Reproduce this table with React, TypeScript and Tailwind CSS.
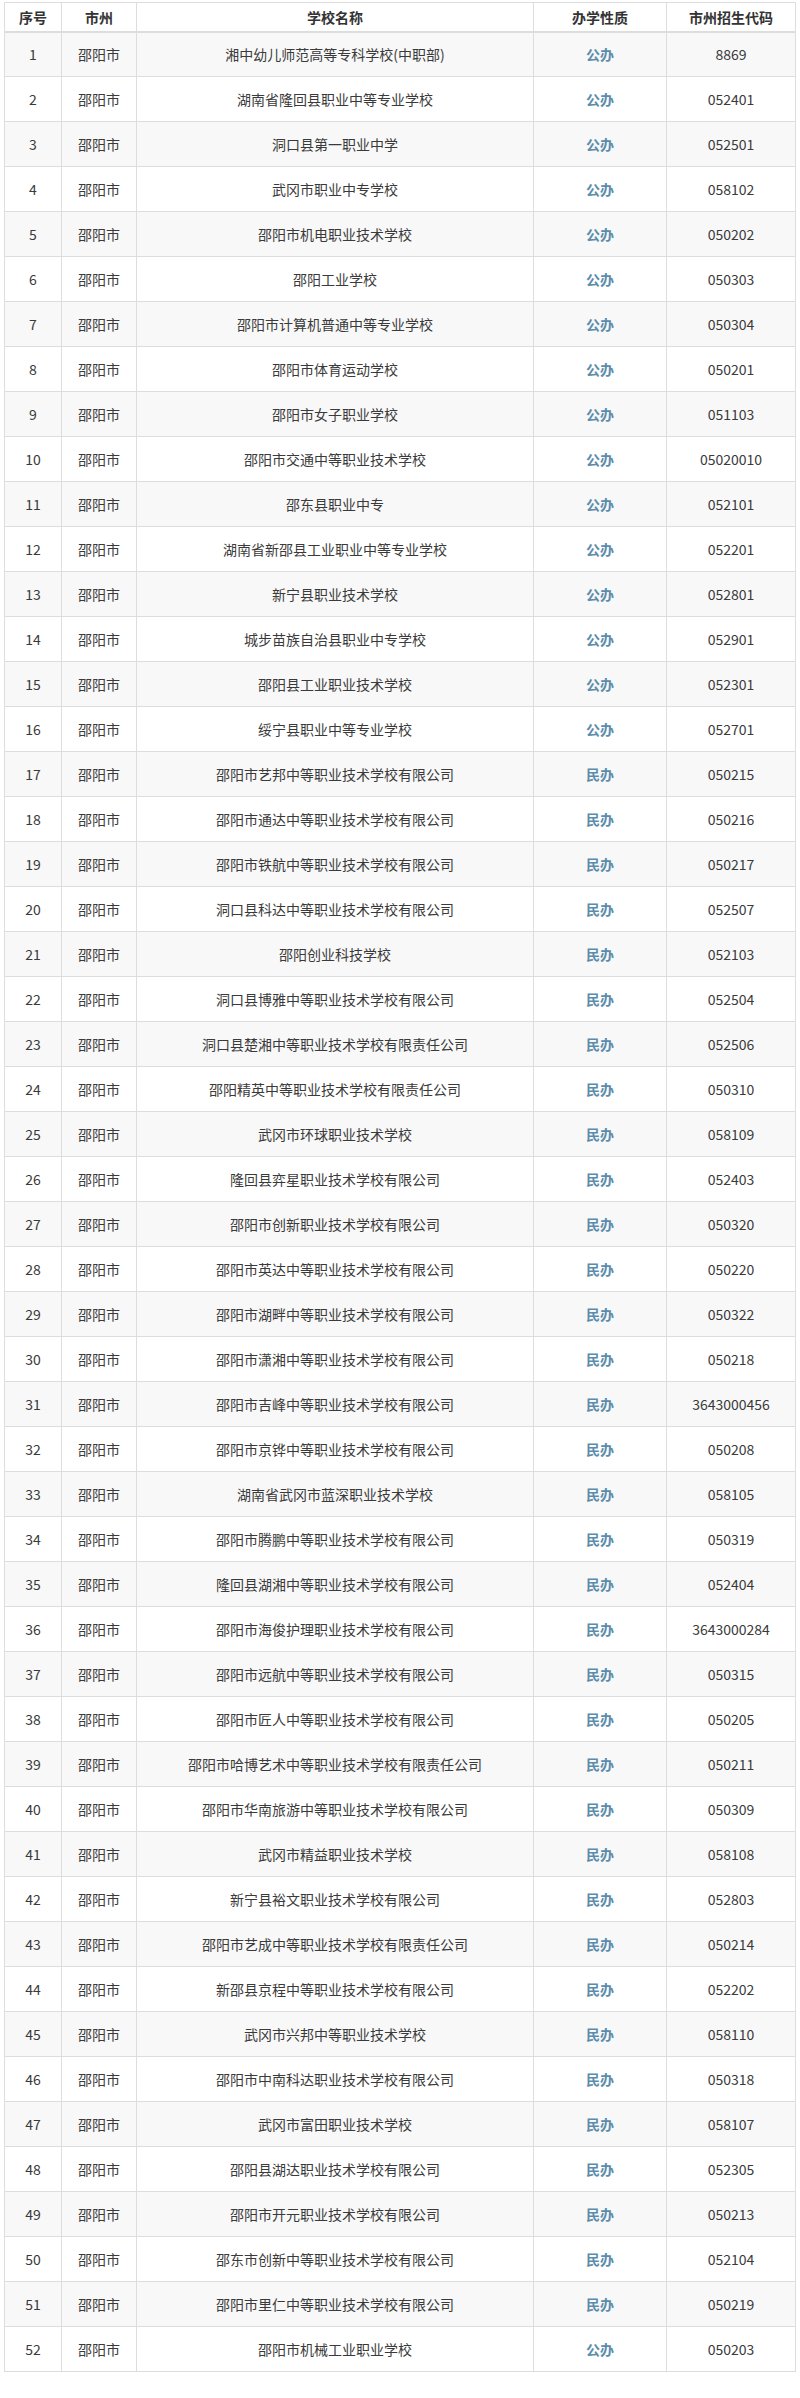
const rows: [string, string, string][] = [
  ["湘中幼儿师范高等专科学校(中职部)", "公办", "8869"],
  ["湖南省隆回县职业中等专业学校", "公办", "052401"],
  ["洞口县第一职业中学", "公办", "052501"],
  ["武冈市职业中专学校", "公办", "058102"],
  ["邵阳市机电职业技术学校", "公办", "050202"],
  ["邵阳工业学校", "公办", "050303"],
  ["邵阳市计算机普通中等专业学校", "公办", "050304"],
  ["邵阳市体育运动学校", "公办", "050201"],
  ["邵阳市女子职业学校", "公办", "051103"],
  ["邵阳市交通中等职业技术学校", "公办", "05020010"],
  ["邵东县职业中专", "公办", "052101"],
  ["湖南省新邵县工业职业中等专业学校", "公办", "052201"],
  ["新宁县职业技术学校", "公办", "052801"],
  ["城步苗族自治县职业中专学校", "公办", "052901"],
  ["邵阳县工业职业技术学校", "公办", "052301"],
  ["绥宁县职业中等专业学校", "公办", "052701"],
  ["邵阳市艺邦中等职业技术学校有限公司", "民办", "050215"],
  ["邵阳市通达中等职业技术学校有限公司", "民办", "050216"],
  ["邵阳市铁航中等职业技术学校有限公司", "民办", "050217"],
  ["洞口县科达中等职业技术学校有限公司", "民办", "052507"],
  ["邵阳创业科技学校", "民办", "052103"],
  ["洞口县博雅中等职业技术学校有限公司", "民办", "052504"],
  ["洞口县楚湘中等职业技术学校有限责任公司", "民办", "052506"],
  ["邵阳精英中等职业技术学校有限责任公司", "民办", "050310"],
  ["武冈市环球职业技术学校", "民办", "058109"],
  ["隆回县弈星职业技术学校有限公司", "民办", "052403"],
  ["邵阳市创新职业技术学校有限公司", "民办", "050320"],
  ["邵阳市英达中等职业技术学校有限公司", "民办", "050220"],
  ["邵阳市湖畔中等职业技术学校有限公司", "民办", "050322"],
  ["邵阳市潇湘中等职业技术学校有限公司", "民办", "050218"],
  ["邵阳市吉峰中等职业技术学校有限公司", "民办", "3643000456"],
  ["邵阳市京铧中等职业技术学校有限公司", "民办", "050208"],
  ["湖南省武冈市蓝深职业技术学校", "民办", "058105"],
  ["邵阳市腾鹏中等职业技术学校有限公司", "民办", "050319"],
  ["隆回县湖湘中等职业技术学校有限公司", "民办", "052404"],
  ["邵阳市海俊护理职业技术学校有限公司", "民办", "3643000284"],
  ["邵阳市远航中等职业技术学校有限公司", "民办", "050315"],
  ["邵阳市匠人中等职业技术学校有限公司", "民办", "050205"],
  ["邵阳市哈博艺术中等职业技术学校有限责任公司", "民办", "050211"],
  ["邵阳市华南旅游中等职业技术学校有限公司", "民办", "050309"],
  ["武冈市精益职业技术学校", "民办", "058108"],
  ["新宁县裕文职业技术学校有限公司", "民办", "052803"],
  ["邵阳市艺成中等职业技术学校有限责任公司", "民办", "050214"],
  ["新邵县京程中等职业技术学校有限公司", "民办", "052202"],
  ["武冈市兴邦中等职业技术学校", "民办", "058110"],
  ["邵阳市中南科达职业技术学校有限公司", "民办", "050318"],
  ["武冈市富田职业技术学校", "民办", "058107"],
  ["邵阳县湖达职业技术学校有限公司", "民办", "052305"],
  ["邵阳市开元职业技术学校有限公司", "民办", "050213"],
  ["邵东市创新中等职业技术学校有限公司", "民办", "052104"],
  ["邵阳市里仁中等职业技术学校有限公司", "民办", "050219"],
  ["邵阳市机械工业职业学校", "公办", "050203"],
];

const headers = ["序号", "市州", "学校名称", "办学性质", "市州招生代码"];

export default function App() {
  return (
    <div
      className="w-[800px] min-h-[2398px] bg-white pt-[2px] pl-[4px] text-[14px] text-[#3a3a3a]"
      style={{ fontFamily: '"Noto Sans CJK SC", "Noto Sans", sans-serif' }}
    >
      <table className="w-[791px] table-fixed border-collapse border border-[#dddddd]">
        <colgroup>
          <col className="w-[57px]" />
          <col className="w-[75px]" />
          <col className="w-[397px]" />
          <col className="w-[133px]" />
          <col className="w-[129px]" />
        </colgroup>
        <thead>
          <tr className="h-[29px] bg-white">
            {headers.map((h) => (
              <th
                key={h}
                className="border border-b-2 border-[#dddddd] p-0 text-center font-bold leading-none text-[#333333]"
              >
                {h}
              </th>
            ))}
          </tr>
        </thead>
        <tbody>
          {rows.map(([name, kind, code], i) => (
            <tr key={i} className={`h-[45px] ${i % 2 === 0 ? "bg-[#f8f8f8]" : "bg-white"}`}>
              <td className="border border-[#dddddd] p-0 text-center">{i + 1}</td>
              <td className="border border-[#dddddd] p-0 text-center">邵阳市</td>
              <td className="border border-[#dddddd] p-0 text-center">{name}</td>
              <td className="border border-[#dddddd] p-0 text-center font-semibold text-[#5b8cab]">{kind}</td>
              <td className="border border-[#dddddd] p-0 text-center">{code}</td>
            </tr>
          ))}
        </tbody>
      </table>
    </div>
  );
}
